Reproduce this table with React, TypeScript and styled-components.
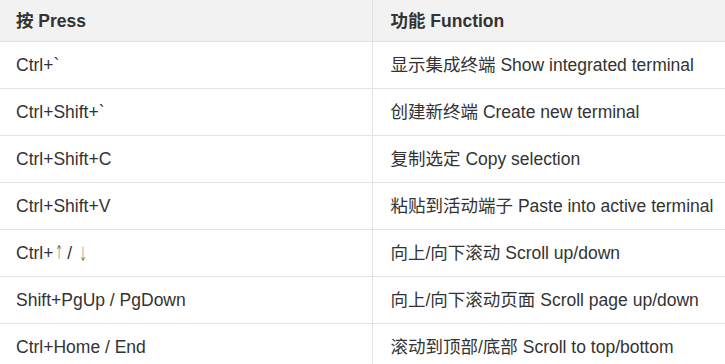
import React from "react";
import styled, { createGlobalStyle } from "styled-components";

const GlobalStyle = createGlobalStyle`
  html, body {
    margin: 0;
    padding: 0;
    background: #ffffff;
    overflow: hidden;
  }
  body {
    font-family: "Liberation Sans", Arial, "Noto Sans CJK SC", sans-serif;
    color: #333333;
  }
`;

const Table = styled.table`
  width: 760px;
  table-layout: fixed;
  border-collapse: collapse;
  font-size: 17.5px;
`;

const HeadCell = styled.th<{ $first?: boolean }>`
  height: 41px;
  padding: 0 0 0 ${(p) => (p.$first ? "16px" : "18px")};
  text-align: left;
  font-weight: 700;
  line-height: 20px;
  background: #f2f2f2;
  color: #333333;
  border-bottom: 1px solid #e2e2e2;
  border-right: ${(p) => (p.$first ? "1px solid #e2e2e2" : "none")};
  white-space: nowrap;
`;

const Cell = styled.td<{ $first?: boolean }>`
  height: 46px;
  padding: 0 0 0 ${(p) => (p.$first ? "16px" : "18px")};
  line-height: 20px;
  color: #333333;
  border-bottom: 1px solid #e2e2e2;
  border-right: ${(p) => (p.$first ? "1px solid #e2e2e2" : "none")};
  white-space: nowrap;
`;

const Arrow = styled.span<{ $down?: boolean }>`
  display: inline-block;
  width: 9px;
  text-align: center;
  font-family: "DejaVu Sans", sans-serif;
  font-size: 17px;
  font-weight: 300;
  line-height: 20px;
  color: ${(p) => (p.$down ? "#6a4a1c" : "#264a3a")};
  transform: translateY(${(p) => (p.$down ? "3px" : "1px")}) scale(0.55, 1.15);
  transform-origin: center bottom;
`;

type Shortcut = { id: string; keys: React.ReactNode; zh: string; en: string };

const shortcuts: Shortcut[] = [
  { id: "a", keys: "Ctrl+`", zh: "显示集成终端", en: "Show integrated terminal" },
  { id: "b", keys: "Ctrl+Shift+`", zh: "创建新终端", en: "Create new terminal" },
  { id: "c", keys: "Ctrl+Shift+C", zh: "复制选定", en: "Copy selection" },
  { id: "d", keys: "Ctrl+Shift+V", zh: "粘贴到活动端子", en: "Paste into active terminal" },
  {
    id: "e",
    keys: (
      <>
        Ctrl+<Arrow>↑</Arrow> / <Arrow $down>↓</Arrow>
      </>
    ),
    zh: "向上/向下滚动",
    en: "Scroll up/down",
  },
  { id: "f", keys: "Shift+PgUp / PgDown", zh: "向上/向下滚动页面", en: "Scroll page up/down" },
  { id: "g", keys: "Ctrl+Home / End", zh: "滚动到顶部/底部", en: "Scroll to top/bottom" },
];

export default function App() {
  return (
    <>
      <GlobalStyle />
      <Table>
        <colgroup>
          <col style={{ width: 372 }} />
          <col />
        </colgroup>
        <thead>
          <tr>
            <HeadCell $first>按 Press</HeadCell>
            <HeadCell>功能 Function</HeadCell>
          </tr>
        </thead>
        <tbody>
          {shortcuts.map((s) => (
            <tr key={s.id}>
              <Cell $first>{s.keys}</Cell>
              <Cell>
                {s.zh} {s.en}
              </Cell>
            </tr>
          ))}
        </tbody>
      </Table>
    </>
  );
}
